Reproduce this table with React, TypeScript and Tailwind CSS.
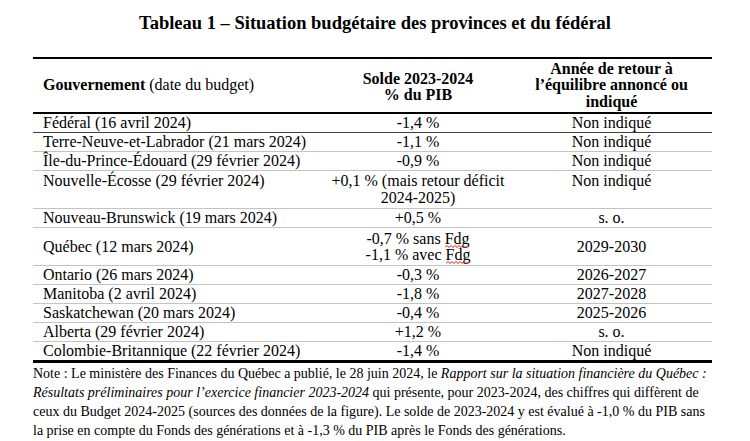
import React from "react";

type Row = {
  gov: string;
  solde: React.ReactNode;
  annee: string;
  align?: "top" | "middle";
  tall?: boolean;
  line?: "dark" | "light" | "thick";
};

const Squiggle = () => (
  <svg width="23" height="3" viewBox="0 0 23 3" className="block">
    <path
      d="M0 2.5 L2 0.5 L4 2.5 L6 0.5 L8 2.5 L10 0.5 L12 2.5 L14 0.5 L16 2.5 L18 0.5 L20 2.5 L22 0.5"
      fill="none"
      stroke="#e01010"
      strokeWidth="1"
    />
  </svg>
);

const rows: Row[] = [
  { gov: "Fédéral (16 avril 2024)", solde: "-1,4 %", annee: "Non indiqué", line: "dark" },
  { gov: "Terre-Neuve-et-Labrador (21 mars 2024)", solde: "-1,1 %", annee: "Non indiqué" },
  { gov: "Île-du-Prince-Édouard (29 février 2024)", solde: "-0,9 %", annee: "Non indiqué" },
  {
    gov: "Nouvelle-Écosse (29 février 2024)",
    solde: "+0,1 % (mais retour déficit 2024-2025)",
    annee: "Non indiqué",
    tall: true,
    align: "top",
  },
  { gov: "Nouveau-Brunswick (19 mars 2024)", solde: "+0,5 %", annee: "s. o." },
  {
    gov: "Québec (12 mars 2024)",
    solde: (
      <span className="flex flex-col items-center leading-[16px]">
        <span className="whitespace-pre">
          {"-0,7 % sans "}
          <span className="relative z-10 inline-block">
            Fdg
            <span className="absolute left-0 top-[14px]">
              <Squiggle />
            </span>
          </span>
        </span>
        <span className="whitespace-pre">
          {"-1,1 % avec "}
          <span className="relative z-10 inline-block">
            Fdg
            <span className="absolute left-0 top-[14px]">
              <Squiggle />
            </span>
          </span>
        </span>
      </span>
    ),
    annee: "2029-2030",
    tall: true,
    align: "middle",
  },
  { gov: "Ontario (26 mars 2024)", solde: "-0,3 %", annee: "2026-2027" },
  { gov: "Manitoba (2 avril 2024)", solde: "-1,8 %", annee: "2027-2028" },
  { gov: "Saskatchewan (20 mars 2024)", solde: "-0,4 %", annee: "2025-2026" },
  { gov: "Alberta (29 février 2024)", solde: "+1,2 %", annee: "s. o." },
  { gov: "Colombie-Britannique (22 février 2024)", solde: "-1,4 %", annee: "Non indiqué", line: "thick" },
];

export default function App() {
  const lineClass = (line?: Row["line"]) => {
    switch (line) {
      case "dark":
        return "border-b border-[#404040]";
      case "thick":
        return "border-b-[3px] border-black";
      default:
        return "border-b border-[#c4c4c4]";
    }
  };

  return (
    <div
      className="w-[750px] h-[441px] overflow-hidden bg-white text-black"
      style={{ fontFamily: '"Liberation Serif", "Times New Roman", serif' }}
    >
      <div className="h-[57px] pt-[12px] text-center">
        <h1 className="text-[18.5px] leading-[22px] font-bold">
          Tableau 1 – Situation budgétaire des provinces et du fédéral
        </h1>
      </div>

      <div className="ml-[33px] w-[679px]">
        {/* header */}
        <div className="grid grid-cols-[292px_186px_201px] h-[57px] border-y-2 border-black text-[16px] leading-[16.5px]">
          <div className="flex items-center pl-[10px]">
            <span>
              <b>Gouvernement</b> (date du budget)
            </span>
          </div>
          <div className="flex items-center justify-center text-center font-bold pt-[3px]">
            Solde 2023-2024
            <br />% du PIB
          </div>
          <div className="flex items-center justify-center text-center font-bold px-[8px]">
            Année de retour à l’équilibre annoncé ou indiqué
          </div>
        </div>

        {/* rows */}
        {rows.map((r) => (
          <div
            key={r.gov}
            className={`grid grid-cols-[292px_186px_201px] text-[16px] leading-[18px] ${
              r.tall ? "h-[38px]" : "h-[19px]"
            } ${r.line === "thick" ? "h-[21px]" : ""} ${lineClass(r.line)}`}
          >
            <div
              className={`pl-[10px] flex ${r.align === "middle" ? "items-center" : "items-start"} ${
                r.align === "top" ? "pt-[1px]" : ""
              }`}
            >
              {r.gov}
            </div>
            <div
              className={`px-[5px] flex justify-center text-center ${
                r.align === "middle" ? "items-center" : "items-start"
              } ${r.align === "top" ? "pt-[1px] leading-[17px]" : ""}`}
            >
              {r.solde}
            </div>
            <div
              className={`flex justify-center text-center ${
                r.align === "middle" ? "items-center" : "items-start"
              } ${r.align === "top" ? "pt-[1px]" : ""}`}
            >
              {r.annee}
            </div>
          </div>
        ))}

        {/* note */}
        <div className="pt-[1px] text-[14px] leading-[19px] whitespace-nowrap">
          <div>
            Note : Le ministère des Finances du Québec a publié, le 28 juin 2024, le{" "}
            <i>Rapport sur la situation financière du Québec :</i>
          </div>
          <div>
            <i>Résultats préliminaires pour l’exercice financier 2023-2024</i> qui présente, pour 2023-2024, des
            chiffres qui diffèrent de
          </div>
          <div>
            ceux du Budget 2024-2025 (sources des données de la figure). Le solde de 2023-2024 y est évalué à -1,0 %
            du PIB sans
          </div>
          <div>la prise en compte du Fonds des générations et à -1,3 % du PIB après le Fonds des générations.</div>
        </div>
      </div>
    </div>
  );
}
